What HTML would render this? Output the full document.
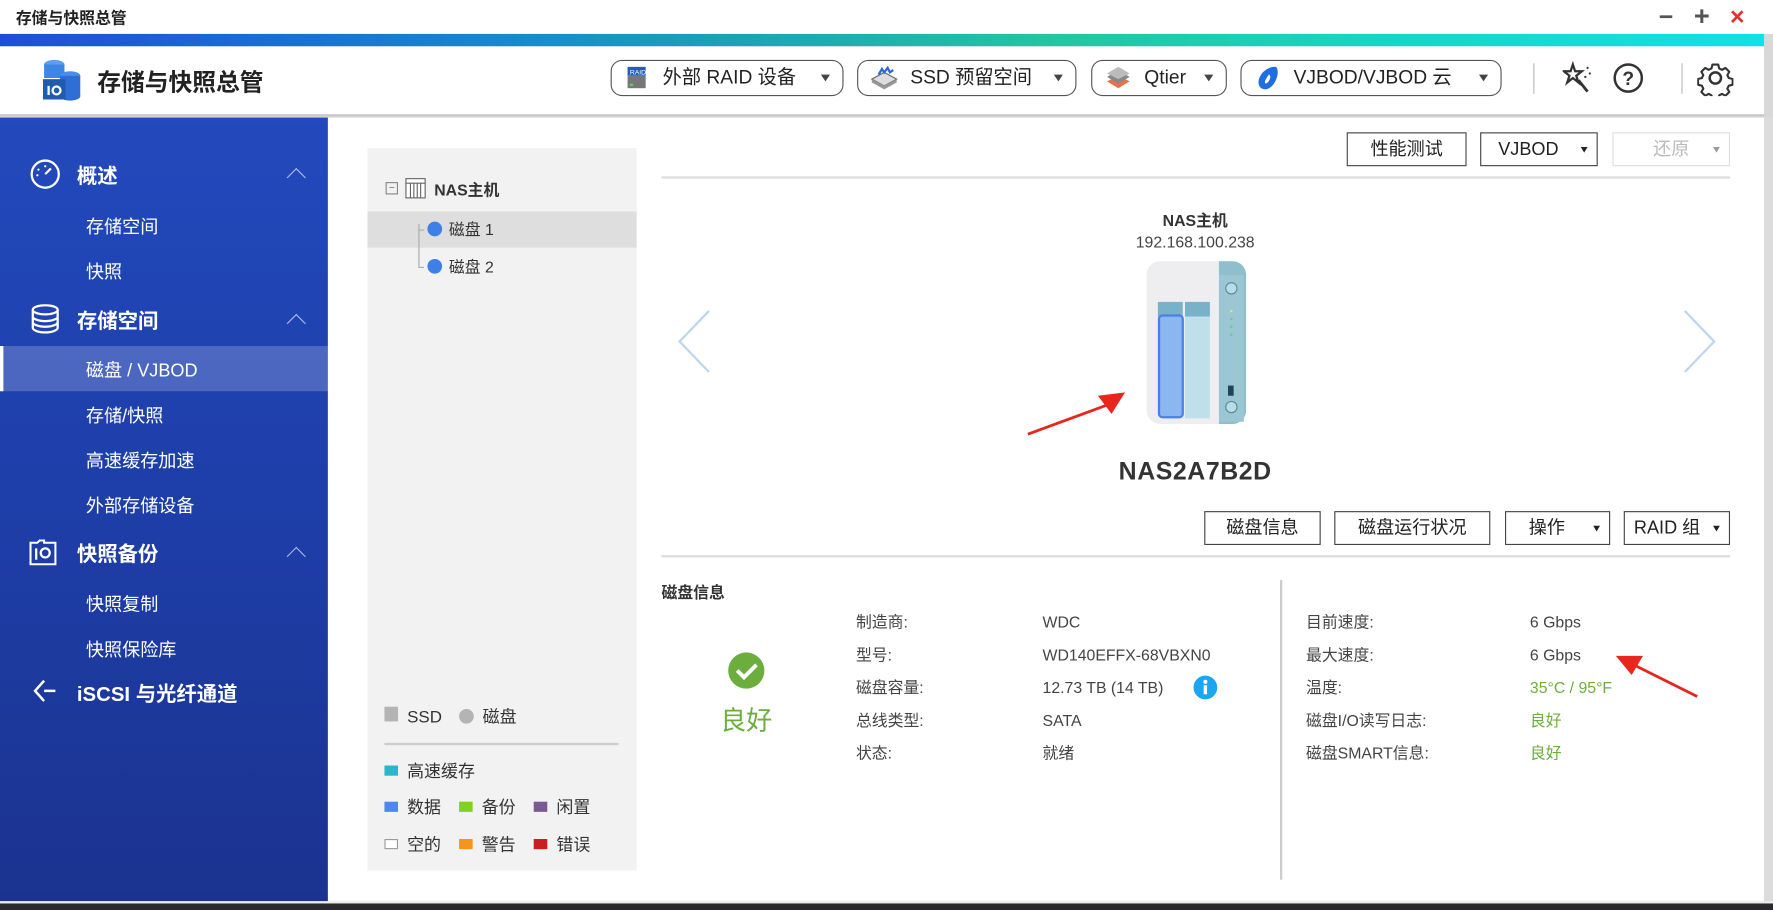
<!DOCTYPE html>
<html><head><meta charset="utf-8">
<style>
*{margin:0;padding:0;box-sizing:border-box}
html,body{width:1773px;height:910px;overflow:hidden;background:#c8c8c8}
#s{position:absolute;left:0;top:0;width:1568px;height:805px;transform:scale(1.13074);transform-origin:0 0;font-family:"Liberation Sans","Noto Sans CJK SC",sans-serif;color:#333;background:#d8d8d8}
.a{position:absolute;white-space:nowrap}
.pill{position:absolute;top:53px;height:32px;border:1.5px solid #555;border-radius:10px;background:#fff;font-size:17px;line-height:29px;color:#222}
.pill .t{position:absolute;right:11px;top:12px;width:0;height:0;border-left:4px solid transparent;border-right:4px solid transparent;border-top:6px solid #444}
.btn{position:absolute;height:30px;border:1px solid #444;background:#fff;font-size:16px;line-height:30px;text-align:center;color:#222}
.btn .t{position:absolute;right:8px;top:12px;width:0;height:0;border-left:3.5px solid transparent;border-right:3.5px solid transparent;border-top:5px solid #222}
.side .h{position:absolute;left:68px;font-size:18px;font-weight:bold;color:#fff}
.side .i{position:absolute;left:76px;font-size:16px;color:#fff}
.side .c{position:absolute;left:256px;width:12px;height:12px;border-left:1.5px solid #aab8e8;border-top:1.5px solid #aab8e8;transform:rotate(45deg)}
.lb{position:absolute;font-size:15px;color:#333}
.sq{display:inline-block;width:12px;height:9px;margin-right:8px;vertical-align:1px}
</style></head><body>
<div id="s">
<div class="a" style="left:0;top:0;width:1568px;height:30px;background:#fff"></div>
<div class="a" style="left:14px;top:6px;font-size:14px;color:#222;font-weight:bold">存储与快照总管</div>
<div class="a" style="left:1467px;top:2px;font-size:22px;color:#555;font-weight:bold">−</div>
<div class="a" style="left:1498px;top:1px;font-size:24px;color:#555;font-weight:bold">+</div>
<div class="a" style="left:1530px;top:2px;font-size:22px;color:#e53030;font-weight:bold">×</div>
<div class="a" style="left:0;top:30px;width:1560px;height:11px;background:linear-gradient(90deg,#1d4fd6 0%,#1a8ac8 30%,#22c6a0 60%,#12d8c8 80%,#10e0e8 100%)"></div>
<div class="a" style="left:0;top:41px;width:1560px;height:62px;background:#fff;border-bottom:2px solid #c8c8c8"></div>
<svg class="a" style="left:36px;top:52px" width="38" height="38" viewBox="0 0 38 38">
<ellipse cx="12" cy="5" rx="9" ry="4" fill="#5aa0f0"/><rect x="3" y="5" width="18" height="12" fill="#3d86e6"/>
<ellipse cx="26" cy="15" rx="9" ry="4" fill="#4a8ee8"/><rect x="17" y="15" width="18" height="18" fill="#2f6fd4"/><ellipse cx="26" cy="33" rx="9" ry="4" fill="#2f6fd4"/>
<rect x="2" y="18" width="20" height="18" fill="#1f5cb0"/><rect x="6" y="24" width="2" height="8" fill="#fff"/><circle cx="14" cy="28" r="3.5" fill="none" stroke="#fff" stroke-width="2"/></svg>
<div class="a" style="left:86px;top:57px;font-size:21px;font-weight:bold;color:#222">存储与快照总管</div>
<div class="pill" style="left:540px;width:206px"><svg class="a" style="left:12px;top:5px" width="22" height="20"><rect x="2" y="0" width="16" height="8" fill="#1d5fc0"/><text x="4" y="7" font-size="6" fill="#fff" font-family="Liberation Sans">RAID</text><rect x="2" y="8" width="16" height="11" fill="#777"/><rect x="4" y="15" width="3" height="2" fill="#6c6"/></svg><span class="a" style="left:45px">外部 RAID 设备</span><span class="t"></span></div>
<div class="pill" style="left:758px;width:194px"><svg class="a" style="left:10px;top:4px" width="26" height="22"><path d="M2 12 L13 6 L24 12 L13 18Z" fill="#ddd" stroke="#666"/><path d="M2 12 L2 15 L13 21 L24 15 L24 12 L13 18Z" fill="#999"/><path d="M8 8 l3-5 l2 3 l3-4 l2 4 l3-2" stroke="#2a6ad8" stroke-width="2" fill="none"/></svg><span class="a" style="left:46px">SSD 预留空间</span><span class="t"></span></div>
<div class="pill" style="left:965px;width:120px"><svg class="a" style="left:10px;top:4px" width="26" height="22"><path d="M3 14 L13 20 L23 14 L13 9Z" fill="#e8704a"/><path d="M3 10 L13 16 L23 10 L13 4Z" fill="#888"/><path d="M3 7 L13 12 L23 7 L13 1Z" fill="#bbb"/></svg><span class="a" style="left:46px">Qtier</span><span class="t"></span></div>
<div class="pill" style="left:1097px;width:231px"><svg class="a" style="left:12px;top:4px" width="22" height="22"><path d="M18 1 C10 1 3 8 3 15 C3 19 6 21 9 21 C15 21 20 12 20 6 C20 3 19 1 18 1Z M12 8 C14 8 14 12 11 15 C9 17 8 15 9 13Z" fill="#1f6fe0" fill-rule="evenodd"/></svg><span class="a" style="left:46px">VJBOD/VJBOD 云</span><span class="t"></span></div>
<div class="a" style="left:1356px;top:56px;width:1px;height:27px;background:#bbb"></div>
<svg class="a" style="left:1382px;top:54px" width="28" height="30"><path d="M9 3 l2 6 h6 l-5 4 l2 6 l-5-4 l-5 4 l2-6 l-5-4 h6z" fill="none" stroke="#333" stroke-width="2"/><path d="M14 17 l8 10" stroke="#333" stroke-width="2.5"/><circle cx="22" cy="6" r="1" fill="#333"/><circle cx="24" cy="11" r="1" fill="#333"/><circle cx="20" cy="14" r="1" fill="#333"/></svg>
<svg class="a" style="left:1426px;top:55px" width="28" height="28"><circle cx="14" cy="14" r="12" fill="none" stroke="#333" stroke-width="2.2"/><text x="14" y="20" text-anchor="middle" font-size="17" font-weight="bold" fill="#333" font-family="Liberation Sans">?</text></svg>
<div class="a" style="left:1487px;top:56px;width:1px;height:27px;background:#bbb"></div>
<svg class="a" style="left:1501px;top:53px" width="32" height="32" viewBox="0 0 32 32"><path d="M13 2h6l1 4 3 1.5 3.5-2 4 4-2 3.5 1.5 3 4 1v6l-4 1-1.5 3 2 3.5-4 4-3.5-2-3 1.5-1 4h-6l-1-4-3-1.5-3.5 2-4-4 2-3.5-1.5-3-4-1v-6l4-1 1.5-3-2-3.5 4-4 3.5 2 3-1.5z" transform="translate(16 16) scale(.85) translate(-16 -16)" fill="none" stroke="#333" stroke-width="2.2" stroke-linejoin="round"/><circle cx="16" cy="16" r="5" fill="none" stroke="#333" stroke-width="2.2"/></svg>
<div class="a side" style="left:0;top:104px;width:290px;height:693px;background:linear-gradient(180deg,#2249bd 0%,#1e3ea8 50%,#1b3390 100%)">
<div class="a" style="left:0;top:202px;width:290px;height:40px;background:rgba(255,255,255,.2);border-left:3px solid #fff"></div>
<svg class="a" style="left:26px;top:36px" width="28" height="28"><circle cx="14" cy="14" r="12" fill="none" stroke="#fff" stroke-width="2"/><path d="M14 14 l5-5" stroke="#fff" stroke-width="2"/><circle cx="8" cy="10" r="1" fill="#fff"/><circle cx="14" cy="7" r="1" fill="#fff"/><circle cx="7" cy="15" r="1" fill="#fff"/></svg>
<div class="h" style="top:38px">概述</div><div class="c" style="top:47px"></div>
<div class="i" style="top:83px">存储空间</div>
<div class="i" style="top:123px">快照</div>
<svg class="a" style="left:27px;top:165px" width="26" height="26"><ellipse cx="13" cy="5" rx="11" ry="4" fill="none" stroke="#fff" stroke-width="2"/><path d="M2 5v16c0 2 5 4 11 4s11-2 11-4V5M2 11c0 2 5 4 11 4s11-2 11-4M2 16c0 2 5 4 11 4s11-2 11-4" fill="none" stroke="#fff" stroke-width="2"/></svg>
<div class="h" style="top:166px">存储空间</div><div class="c" style="top:176px"></div>
<div class="i" style="top:210px">磁盘 / VJBOD</div>
<div class="i" style="top:250px">存储/快照</div>
<div class="i" style="top:290px">高速缓存加速</div>
<div class="i" style="top:330px">外部存储设备</div>
<svg class="a" style="left:25px;top:371px" width="26" height="26"><path d="M2 5h6l2-2h4v2h10v19H2z" fill="none" stroke="#fff" stroke-width="1.8"/><rect x="6" y="10" width="2" height="10" fill="#fff"/><circle cx="15" cy="14" r="4" fill="none" stroke="#fff" stroke-width="2"/></svg>
<div class="h" style="top:372px">快照备份</div><div class="c" style="top:382px"></div>
<div class="i" style="top:417px">快照复制</div>
<div class="i" style="top:457px">快照保险库</div>
<svg class="a" style="left:27px;top:495px" width="26" height="26"><path d="M12 3 L4 12 L12 21" fill="none" stroke="#fff" stroke-width="2.2"/><path d="M12 12h10" stroke="#fff" stroke-width="2.2"/></svg>
<div class="h" style="top:496px">iSCSI 与光纤通道</div>
</div>
<div class="a" style="left:290px;top:104px;width:1270px;height:693px;background:#fff"></div>
<div class="a" style="left:1560px;top:104px;width:8px;height:700px;background:#dcdcdc"></div>
<div class="a" style="left:0;top:797px;width:1568px;height:8px;background:#eee"></div>
<div class="a" style="left:0;top:799px;width:1568px;height:6px;background:#2a2a2e"></div>
<div class="a" style="left:325px;top:131px;width:238px;height:639px;background:#f2f2f2"></div>
<div class="a" style="left:325px;top:187px;width:238px;height:32px;background:#dedede"></div>
<div class="a" style="left:341px;top:161px;width:11px;height:11px;border:1px solid #888;font-size:9px;line-height:8px;text-align:center;color:#666">−</div>
<svg class="a" style="left:358px;top:157px" width="19" height="19"><rect x="1" y="1" width="17" height="17" fill="#fff" stroke="#666"/><path d="M1 5h17M5 5v13M8 5v13M11 5v13M14 5v13" stroke="#666"/></svg>
<div class="a" style="left:384px;top:158px;font-size:14px;font-weight:bold;color:#333">NAS主机</div>
<div class="a" style="left:370px;top:198px;width:1px;height:38px;background:#aaa"></div>
<div class="a" style="left:370px;top:203px;width:5px;height:1px;background:#aaa"></div>
<div class="a" style="left:370px;top:236px;width:5px;height:1px;background:#aaa"></div>
<div class="a" style="left:378px;top:196px;width:13px;height:13px;border-radius:50%;background:#3f7fe8"></div>
<div class="a" style="left:397px;top:193px;font-size:14px;color:#333">磁盘 1</div>
<div class="a" style="left:378px;top:229px;width:13px;height:13px;border-radius:50%;background:#3f7fe8"></div>
<div class="a" style="left:397px;top:226px;font-size:14px;color:#333">磁盘 2</div>
<div class="lb" style="left:340px;top:623px"><span class="sq" style="background:#b4b4b4;width:12px;height:13px"></span>SSD<span style="display:inline-block;width:13px;height:13px;border-radius:50%;background:#b4b4b4;margin:0 8px -1px 15px"></span>磁盘</div>
<div class="a" style="left:340px;top:657px;width:207px;height:2px;background:#ccc"></div>
<div class="lb" style="left:340px;top:671px"><span class="sq" style="background:#2bb7c8"></span>高速缓存</div>
<div class="lb" style="left:340px;top:703px"><span class="sq" style="background:#4f86f0"></span>数据<span class="sq" style="background:#7ed321;margin-left:16px"></span>备份<span class="sq" style="background:#7a5a90;margin-left:16px"></span>闲置</div>
<div class="lb" style="left:340px;top:736px"><span class="sq" style="border:1px solid #999;background:#fff"></span>空的<span class="sq" style="background:#f7941d;margin-left:16px"></span>警告<span class="sq" style="background:#c81e1e;margin-left:16px"></span>错误</div>
<div class="btn" style="left:1191px;top:117px;width:106px">性能测试</div>
<div class="btn" style="left:1309px;top:117px;width:104px;text-align:left;padding-left:15px">VJBOD<span class="t"></span></div>
<div class="btn" style="left:1426px;top:117px;width:104px;border-color:#ddd;color:#bbb">还原<span class="t" style="border-top-color:#999"></span></div>
<div class="a" style="left:585px;top:156px;width:945px;height:2px;background:#ddd"></div>
<svg class="a" style="left:597px;top:272px" width="34" height="60"><path d="M30 3 L4 30 L30 57" fill="none" stroke="#bcd6f2" stroke-width="2"/></svg>
<svg class="a" style="left:1486px;top:272px" width="34" height="60"><path d="M4 3 L30 30 L4 57" fill="none" stroke="#bcd6f2" stroke-width="2"/></svg>
<div class="a" style="left:957px;top:185px;width:200px;text-align:center;font-size:14px;font-weight:bold;color:#333">NAS主机</div>
<div class="a" style="left:957px;top:206px;width:200px;text-align:center;font-size:14px;color:#444">192.168.100.238</div>
<svg class="a" style="left:1012px;top:229px" width="92" height="148" viewBox="0 0 92 148">
<rect x="2" y="2" width="88" height="144" rx="12" fill="#eeeef0"/>
<path d="M66 2 h12 a12 12 0 0 1 12 12 v120 a12 12 0 0 1 -12 12 h-12z" fill="#8ebfcd"/>
<rect x="66" y="14" width="22" height="130" fill="#9ac7d3"/>
<rect x="12" y="38" width="22" height="13" fill="#78b2c8"/><rect x="36" y="38" width="22" height="13" fill="#78b2c8"/>
<rect x="36" y="51" width="22" height="90" fill="#bfe0ea"/>
<rect x="13" y="50" width="21" height="90" rx="3" fill="#8cb6f0" stroke="#4a7fe8" stroke-width="2"/>
<circle cx="77" cy="26" r="5" fill="#b8dde6" stroke="#5a8a9a"/><circle cx="77" cy="131" r="5" fill="#b8dde6" stroke="#5a8a9a"/>
<rect x="74" y="112" width="5" height="9" fill="#245"/>
<circle cx="77" cy="46" r="1" fill="#ee4"/><circle cx="77" cy="53" r="1" fill="#6c6"/><circle cx="77" cy="60" r="1" fill="#6c6"/><circle cx="77" cy="67" r="1" fill="#6c6"/>
</svg>
<div class="a" style="left:907px;top:404px;width:300px;text-align:center;font-size:22px;font-weight:bold;color:#333;letter-spacing:.5px">NAS2A7B2D</div>
<svg class="a" style="left:905px;top:342px" width="95" height="46"><path d="M4 42 L80 14" stroke="#e8261e" stroke-width="2.5"/><path d="M90 5 L66 8 L78 24Z" fill="#e8261e"/></svg>
<div class="btn" style="left:1065px;top:452px;width:103px">磁盘信息</div>
<div class="btn" style="left:1180px;top:452px;width:138px">磁盘运行状况</div>
<div class="btn" style="left:1331px;top:452px;width:93px;text-align:left;padding-left:20px">操作<span class="t"></span></div>
<div class="btn" style="left:1436px;top:452px;width:94px;text-align:left;padding-left:8px">RAID 组<span class="t"></span></div>
<div class="a" style="left:585px;top:491px;width:945px;height:2px;background:#ddd"></div>
<div class="a" style="left:585px;top:514px;font-size:14px;font-weight:bold;color:#333">磁盘信息</div>
<svg class="a" style="left:643px;top:576px" width="34" height="34"><circle cx="17" cy="17" r="16" fill="#6cae3e"/><path d="M9 17 l6 6 l11 -11" fill="none" stroke="#fff" stroke-width="3.5"/></svg>
<div class="a" style="left:620px;top:618px;width:80px;text-align:center;font-size:23px;color:#6cae3e">良好</div>
<div class="a" style="left:757px;top:536px;font-size:14px;line-height:29px;color:#444">制造商:<br>型号:<br>磁盘容量:<br>总线类型:<br>状态:</div>
<div class="a" style="left:922px;top:536px;font-size:14px;line-height:29px;color:#444">WDC<br>WD140EFFX-68VBXN0<br>12.73 TB (14 TB)<br>SATA<br>就绪</div>
<svg class="a" style="left:1055px;top:597px" width="22" height="22"><circle cx="11" cy="11" r="10.5" fill="#1ca6f0"/><rect x="9.5" y="9" width="3" height="8" fill="#fff"/><circle cx="11" cy="6" r="1.8" fill="#fff"/></svg>
<div class="a" style="left:1132px;top:513px;width:2px;height:265px;background:#ccc"></div>
<div class="a" style="left:1155px;top:536px;font-size:14px;line-height:29px;color:#444">目前速度:<br>最大速度:<br>温度:<br>磁盘I/O读写日志:<br>磁盘SMART信息:</div>
<div class="a" style="left:1353px;top:536px;font-size:14px;line-height:29px;color:#444">6 Gbps<br>6 Gbps<br><span style="color:#6cae3e">35°C / 95°F</span><br><span style="color:#6cae3e">良好</span><br><span style="color:#6cae3e">良好</span></div>
<svg class="a" style="left:1425px;top:575px" width="80" height="45"><path d="M76 41 L14 10" stroke="#e8261e" stroke-width="2.5"/><path d="M4 5 L28 5 L18 22Z" fill="#e8261e"/></svg>
</div>
</body></html>
